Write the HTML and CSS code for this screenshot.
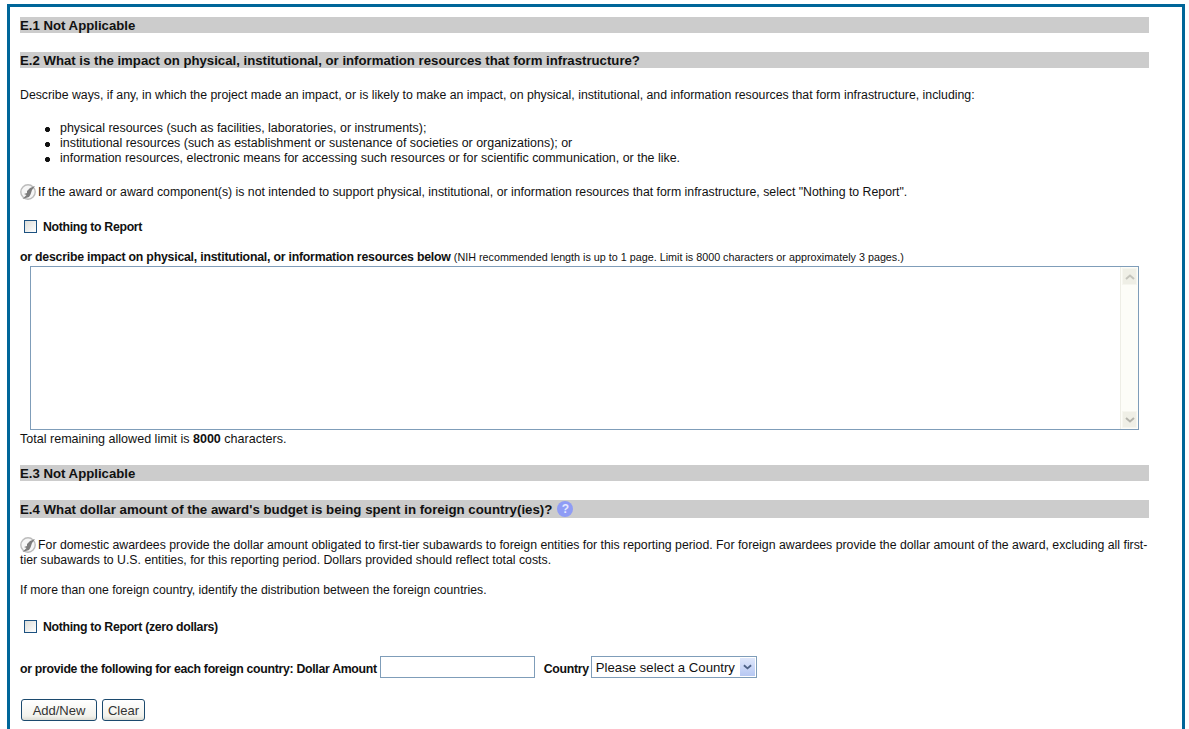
FILE: index.html
```html
<!DOCTYPE html>
<html lang="en">
<head>
<meta charset="utf-8">
<title>E. Impact</title>
<link rel="stylesheet" href="styles.css">
</head>
<body>
<main class="frame">
  <h2 class="bar bar-e1">E.1 Not Applicable</h2>
  <h2 class="bar bar-e2">E.2 What is the impact on physical, institutional, or information resources that form infrastructure?</h2>
  <p class="intro">Describe ways, if any, in which the project made an impact, or is likely to make an impact, on physical, institutional, and information resources that form infrastructure, including:</p>
  <ul class="list">
    <li>physical resources (such as facilities, laboratories, or instruments);</li>
    <li>institutional resources (such as establishment or sustenance of societies or organizations); or</li>
    <li>information resources, electronic means for accessing such resources or for scientific communication, or the like.</li>
  </ul>
  <p class="note note-e2"><svg class="seal" viewBox="0 0 16 16"><circle cx="8" cy="8" r="7.2" fill="#f6f6f6" stroke="#bcbcbc" stroke-width="1.4"/><path d="M15 2 10 4 7 7 7 9 4 10 6.5 11 2.5 15 9 13 10.5 10.5 12 6z" fill="#7c7c7c"/></svg> If the award or award component(s) is not intended to support physical, institutional, or information resources that form infrastructure, select "Nothing to Report".</p>
  <label class="check check-e2"><input type="checkbox" class="box"><span class="check-text">Nothing to Report</span></label>
  <p class="describe"><b>or describe impact on physical, institutional, or information resources below</b> <small>(NIH recommended length is up to 1 page. Limit is 8000 characters or approximately 3 pages.)</small></p>
  <div class="textbox">
    <textarea class="area" aria-label="Impact description"></textarea>
    <div class="scroll">
      <span class="scroll-btn"><svg viewBox="0 0 10 6" class="chev"><path d="M1 5 5 1.5 9 5" fill="none" stroke="#c4c4bc" stroke-width="2"/></svg></span>
      <span class="scroll-btn"><svg viewBox="0 0 10 6" class="chev"><path d="M1 1 5 4.5 9 1" fill="none" stroke="#b4b4ac" stroke-width="2"/></svg></span>
    </div>
  </div>
  <p class="remaining">Total remaining allowed limit is <b>8000</b> characters.</p>
  <h2 class="bar bar-e3">E.3 Not Applicable</h2>
  <h2 class="bar bar-e4">E.4 What dollar amount of the award's budget is being spent in foreign country(ies)? <span class="help">?</span></h2>
  <p class="note note-e4"><svg class="seal" viewBox="0 0 16 16"><circle cx="8" cy="8" r="7.2" fill="#f6f6f6" stroke="#bcbcbc" stroke-width="1.4"/><path d="M15 2 10 4 7 7 7 9 4 10 6.5 11 2.5 15 9 13 10.5 10.5 12 6z" fill="#7c7c7c"/></svg> For domestic awardees provide the dollar amount obligated to first-tier subawards to foreign entities for this reporting period. For foreign awardees provide the dollar amount of the award, excluding all first-tier subawards to U.S. entities, for this reporting period. Dollars provided should reflect total costs.</p>
  <p class="multi">If more than one foreign country, identify the distribution between the foreign countries.</p>
  <label class="check check-e4"><input type="checkbox" class="box"><span class="check-text">Nothing to Report (zero dollars)</span></label>
  <div class="amount-row">
    <label class="row-label" for="amt">or provide the following for each foreign country: Dollar Amount</label>
    <input id="amt" class="amount" type="text">
    <label class="row-label country-label" for="cty">Country</label>
    <div class="select-wrap">
      <select id="cty" class="select"><option>Please select a Country</option></select>
      <span class="select-arrow"><svg viewBox="0 0 10 6" class="chev-sel"><path d="M1 1 5 4.5 9 1" fill="none" stroke="#4d6185" stroke-width="2"/></svg></span>
    </div>
  </div>
  <div class="buttons">
    <button class="btn btn-add" type="button">Add/New</button>
    <button class="btn btn-clear" type="button">Clear</button>
  </div>
</main>
</body>
</html>
```
FILE: styles.css
```css
html, body { margin: 0; padding: 0; height: 729px; overflow: hidden; background: #fff; }
body { font: 12.31px/15px "Liberation Sans", Arial, sans-serif; color: #111; }
p, ul, h2 { margin: 0; padding: 0; }
.frame {
  box-sizing: border-box; width: 1178px; height: 725px; margin: 4px 0 0 7px;
  border: 3px solid #006699; border-bottom: 0; padding: 10px 33px 0 10px;
}
.bar {
  background: #cccccc; font-size: 13.2px; font-weight: bold; line-height: 15px; padding-top: 1px; color: #111;
}
.bar-e2 { margin-top: 19px; }
.bar-e3 { margin-top: 18px; }
.bar-e4 { margin-top: 19px; box-sizing: border-box; height: 18px; line-height: 17px; display: flex; align-items: center; gap: 5px; font-size: 13.27px; }
.intro { margin-top: 20px; }
.list { margin-top: 18px; padding-left: 25px; font-size: 12.44px; list-style: none; }
.list li { padding-left: 15px; background: radial-gradient(circle at 2.5px 8.5px, #111 2.2px, transparent 2.9px); }
.note-e2 { margin-top: 18px; font-size: 12.3px; }
.seal { width: 16px; height: 16px; vertical-align: -4px; margin-right: -1.4px; }
.check { display: flex; align-items: flex-start; font-weight: bold; font-size: 12.3px; letter-spacing: -0.32px; }
.check-text { padding-top: 1px; }
.check-e2 { margin-top: 19px; }
.check-e4 { margin-top: 21px; }
.box { appearance: none; width: 13px; height: 13px; margin: 1px 6px 0 4px; border: 1px solid #1c5180; background: linear-gradient(135deg, #dcdcd7, #fff); box-sizing: border-box; }
.describe { margin-top: 15px; font-size: 12.3px; letter-spacing: -0.22px; }
.describe small { font-size: 10.77px; font-weight: normal; letter-spacing: 0; }
.textbox { display: flex; height: 164px; margin: 1px 10px 0 10px; border: 1px solid #7f9db9; box-sizing: border-box; }
.area { flex: 1; border: 0; resize: none; outline: 0; padding: 2px; }
.scroll { width: 17px; display: flex; flex-direction: column; justify-content: space-between; background: #fdfdf8; padding: 1px 0; border-left: 1px solid #eeeee6; }
.scroll-btn { height: 15px; margin: 0 1px; background: #efefe6; border: 1px solid #f6f6ef; display: flex; align-items: center; justify-content: center; }
.chev { width: 10px; height: 6px; }
.remaining { margin-top: 2px; font-size: 12.55px; }
.note-e4 { margin-top: 19px; font-size: 12.3px; }
.multi { margin-top: 15px; font-size: 12.2px; }
.amount-row { display: flex; align-items: center; margin-top: 21px; font-weight: bold; font-size: 12.3px; letter-spacing: -0.3px; height: 22px; }
.row-label { padding-top: 4px; }
.amount { box-sizing: border-box; width: 155px; height: 22px; margin: 0 0 0 3px; border: 1px solid #7f9db9; padding: 1px; }
.country-label { margin-left: 9px; }
.select-wrap { box-sizing: border-box; display: flex; width: 166px; height: 22px; margin-left: 2px; border: 1px solid #7f9db9; padding: 1px; }
.select { appearance: none; flex: 1; min-width: 0; border: 0; background: #fff; padding: 0 3px; font: 13.18px "Liberation Sans", Arial, sans-serif; letter-spacing: 0; color: #111; outline: 0; }
.select-arrow { width: 15px; background: linear-gradient(#dfe7fb, #b7c8f3); display: flex; align-items: center; justify-content: center; }
.chev-sel { width: 9px; height: 6px; }
.help { width: 16px; height: 16px; margin-top: -2px; border-radius: 50%; background: #8f9cf5; color: #e4e8ff; font-size: 12px; line-height: 16px; text-align: center; }
.buttons { display: flex; gap: 5px; margin: 21px 0 0 1px; }
.btn { box-sizing: border-box; height: 22px; border: 1px solid #1c4a6e; border-radius: 3px; background: linear-gradient(#fff, #f2f2ec 80%, #dcdcd4); font: 13px "Liberation Sans", Arial, sans-serif; color: #333; padding: 0; }
.btn-add { width: 76px; }
.btn-clear { width: 43px; }
```
